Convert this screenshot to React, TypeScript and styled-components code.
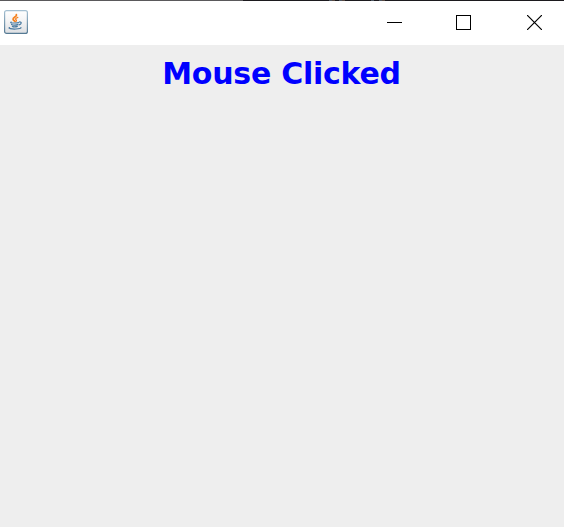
import React from "react";
import styled, { createGlobalStyle } from "styled-components";

const GlobalStyle = createGlobalStyle`
  html, body { margin: 0; height: 100%; overflow: hidden; background: #eeeeee; }
  #root { height: 100%; }
`;

const Window = styled.main`
  display: flex;
  flex-direction: column;
  height: 100vh;
  background: #eeeeee;
`;

const TopEdge = styled.div`
  height: 1px;
  flex: none;
  background: linear-gradient(
    to right,
    #5a595b 0 243px, #1c1a1e 243px 329px,
    #4d5661 329px 332px, #594a43 332px 335px,
    #1c1a1e 335px 339px, #4d5661 339px 342px, #594a43 342px 345px,
    #1c1a1e 345px 371px, #4d5661 371px 374px,
    #1c1a1e 374px 379px, #4d5661 379px 382px, #594a43 382px 385px,
    #1c1a1e 385px
  );
`;

const TitleBar = styled.header`
  display: flex;
  flex: none;
  justify-content: space-between;
  height: 44px;
  box-sizing: border-box;
  padding: 9px 0 0 4px;
  background: #ffffff;
`;

const JavaIcon = styled.svg`
  display: block;
  width: 24px;
  height: 24px;
`;

const Controls = styled.div`
  display: flex;
  gap: 54px;
  padding: 5px 22px 0 0;
`;

const ControlButton = styled.button<{ $offset?: number }>`
  width: 15px;
  height: 15px;
  margin: 0 0 0 ${({ $offset = 0 }) => $offset}px;
  padding: 0;
  border: 0;
  background: none;

  svg {
    display: block;
    fill: none;
    stroke: #000000;
    stroke-width: 1;
  }
`;

const Content = styled.section`
  display: flex;
  justify-content: center;
  padding: 10px 1px 0 0;
`;

const Message = styled.h1`
  margin: 0;
  font: bold 30px/38px "DejaVu Sans", Verdana, sans-serif;
  letter-spacing: -0.25px;
  color: #0000ff;
  white-space: nowrap;
`;

export default function App() {
  return (
    <Window>
      <GlobalStyle />
      <TopEdge />
      <TitleBar>
        <JavaIcon viewBox="0 0 24 24" aria-hidden="true">
          <defs>
            <linearGradient id="tile" x1="0" y1="0" x2="0" y2="1">
              <stop offset="0" stopColor="#ffffff" />
              <stop offset="0.45" stopColor="#f4f4f5" />
              <stop offset="1" stopColor="#dddfe2" />
            </linearGradient>
            <linearGradient id="rim" x1="0" y1="0" x2="0" y2="1">
              <stop offset="0" stopColor="#a5c0d2" />
              <stop offset="1" stopColor="#557a94" />
            </linearGradient>
          </defs>
          <rect x="0.6" y="0.6" width="22.8" height="22.8" rx="2" fill="url(#tile)" stroke="url(#rim)" strokeWidth="1.2" />
          <g fill="none" strokeLinecap="round">
            <path d="M12.4 4.6c1 2-3.6 2.8-3.3 4.8.1 1 1.3 1.4 1.9 2.1" stroke="#f58220" strokeWidth="1.8" />
            <path d="M13.8 7.3c-2.6 1.1-2.6 1.8-1.6 2.7.5.5.1 1-.3 1.4" stroke="#f58220" strokeWidth="1.3" />
            <g stroke="#48799f" strokeWidth="1.2">
              <path d="M7.2 12c-1.6.7.8 1.1 4 1 1.4 0 2.6-.1 3.4-.4" />
              <path d="M15.3 12c2.7-.4 2.5 2.1-.3 2.8" />
              <path d="M7.6 14.3c-.3.8 4.2 1.1 6.2.3" />
              <path d="M8.4 16.2c-.3.8 3.3 1 4.9.2" />
              <path d="M5.6 17.6c-2.2.7 2.2 1.6 6.3 1.4 3.2-.1 5.4-.7 5-1.4" />
            </g>
          </g>
        </JavaIcon>
        <Controls>
          <ControlButton aria-label="Minimize">
            <svg width="15" height="15" viewBox="0 0 15 15">
              <path d="M0 7.5h15" shapeRendering="crispEdges" />
            </svg>
          </ControlButton>
          <ControlButton aria-label="Maximize">
            <svg width="15" height="15" viewBox="0 0 15 15">
              <path d="M.5.5h14v14H.5z" shapeRendering="crispEdges" />
            </svg>
          </ControlButton>
          <ControlButton aria-label="Close" $offset={2}>
            <svg width="15" height="15" viewBox="0 0 15 15">
              <g strokeWidth="1.2">
                <path d="M0 0l15 15M15 0L0 15" />
              </g>
            </svg>
          </ControlButton>
        </Controls>
      </TitleBar>
      <Content>
        <Message>Mouse Clicked</Message>
      </Content>
    </Window>
  );
}
